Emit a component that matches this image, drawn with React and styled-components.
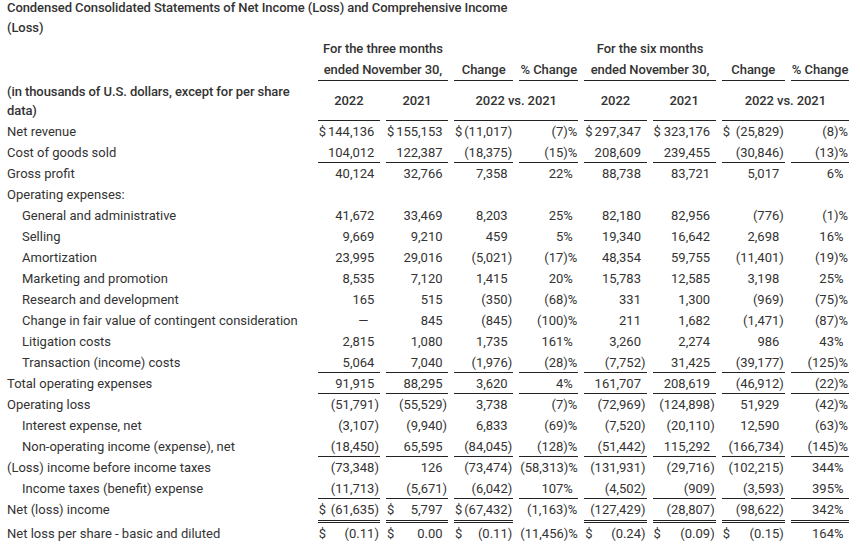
import React from "react";
import styled, { createGlobalStyle, css } from "styled-components";

const GlobalStyle = createGlobalStyle`
  *, *::before, *::after { box-sizing: border-box; }
  html, body { margin: 0; padding: 0; background: #ffffff; }
  body {
    font-family: Roboto, "Liberation Sans", Arial, sans-serif;
    font-size: 13px;
    color: #333333;
  }
`;

const Page = styled.div`
  padding: 0 0 0 1px;
  width: 860px;
`;

const Title = styled.h2`
  margin: -2px 0 0 0;
  padding-left: 6px;
  width: 526px;
  font-size: 13px;
  line-height: 20px;
  font-weight: 500;
  letter-spacing: -0.08px;
  color: #333333;
`;

const Table = styled.table`
  border-collapse: separate;
  border-spacing: 6px 0;
  table-layout: fixed;
  width: 854px;
`;

const Col = styled.col`
  width: ${(p) => p.$w}px;
`;

const Th = styled.th`
  padding: 3px 1px;
  font-weight: 500;
  line-height: 15px;
  letter-spacing: -0.08px;
  text-align: ${(p) => (p.$left ? "left" : "center")};
  vertical-align: middle;
  white-space: nowrap;
  ${(p) =>
    p.$line &&
    css`
      border-bottom: 1px solid #222222;
    `}
  ${(p) =>
    p.$wrap &&
    css`
      white-space: normal;
      line-height: 19px;
      padding: 1px 0;
    `}
`;

const bottomPad = (line) => (line === "double" ? 3 : line ? 2 : 3);

const Label = styled.td`
  padding: 3px 0 ${(p) => bottomPad(p.$line)}px ${(p) => (p.$indent ? 15 : 0)}px;
  line-height: 15px;
  white-space: nowrap;
  text-align: left;
  vertical-align: top;
`;

const Cell = styled.td`
  padding: 3px 1px ${(p) => bottomPad(p.$rowLine)}px 1px;
  line-height: 15px;
  white-space: nowrap;
  text-align: right;
  vertical-align: top;
  ${(p) =>
    p.$line === "single" &&
    css`
      border-bottom: 1px solid #222222;
    `}
  ${(p) =>
    p.$line === "double" &&
    css`
      border-bottom: 3px double #222222;
    `}
`;

const Split = styled.span`
  display: flex;
  justify-content: space-between;
`;

const Pad = styled.span`
  visibility: hidden;
`;

const DashPad = styled.span`
  display: inline-block;
  width: ${(p) => p.$w}px;
`;

const rows = [
  { label: "Net revenue", v: ["$144,136", "$155,153", "$(11,017)", "(7)%", "$297,347", "$323,176", "$(25,829)", "(8)%"] },
  { label: "Cost of goods sold", line: "single", v: ["104,012", "122,387", "(18,375)", "(15)%", "208,609", "239,455", "(30,846)", "(13)%"] },
  { label: "Gross profit", v: ["40,124", "32,766", "7,358", "22%", "88,738", "83,721", "5,017", "6%"] },
  { label: "Operating expenses:", v: ["", "", "", "", "", "", "", ""] },
  { label: "General and administrative", indent: true, v: ["41,672", "33,469", "8,203", "25%", "82,180", "82,956", "(776)", "(1)%"] },
  { label: "Selling", indent: true, v: ["9,669", "9,210", "459", "5%", "19,340", "16,642", "2,698", "16%"] },
  { label: "Amortization", indent: true, v: ["23,995", "29,016", "(5,021)", "(17)%", "48,354", "59,755", "(11,401)", "(19)%"] },
  { label: "Marketing and promotion", indent: true, v: ["8,535", "7,120", "1,415", "20%", "15,783", "12,585", "3,198", "25%"] },
  { label: "Research and development", indent: true, v: ["165", "515", "(350)", "(68)%", "331", "1,300", "(969)", "(75)%"] },
  { label: "Change in fair value of contingent consideration", indent: true, v: ["—", "845", "(845)", "(100)%", "211", "1,682", "(1,471)", "(87)%"] },
  { label: "Litigation costs", indent: true, v: ["2,815", "1,080", "1,735", "161%", "3,260", "2,274", "986", "43%"] },
  { label: "Transaction (income) costs", indent: true, line: "single", v: ["5,064", "7,040", "(1,976)", "(28)%", "(7,752)", "31,425", "(39,177)", "(125)%"] },
  { label: "Total operating expenses", line: "single", v: ["91,915", "88,295", "3,620", "4%", "161,707", "208,619", "(46,912)", "(22)%"] },
  { label: "Operating loss", v: ["(51,791)", "(55,529)", "3,738", "(7)%", "(72,969)", "(124,898)", "51,929", "(42)%"] },
  { label: "Interest expense, net", indent: true, v: ["(3,107)", "(9,940)", "6,833", "(69)%", "(7,520)", "(20,110)", "12,590", "(63)%"] },
  { label: "Non-operating income (expense), net", indent: true, line: "single", v: ["(18,450)", "65,595", "(84,045)", "(128)%", "(51,442)", "115,292", "(166,734)", "(145)%"] },
  { label: "(Loss) income before income taxes", v: ["(73,348)", "126", "(73,474)", "(58,313)%", "(131,931)", "(29,716)", "(102,215)", "344%"] },
  { label: "Income taxes (benefit) expense", indent: true, line: "single", v: ["(11,713)", "(5,671)", "(6,042)", "107%", "(4,502)", "(909)", "(3,593)", "395%"] },
  { label: "Net (loss) income", line: "double", skipLine: [3], v: ["$(61,635)", "$5,797", "$(67,432)", "(1,163)%", "(127,429)", "(28,807)", "(98,622)", "342%"] },
  { label: "Net loss per share - basic and diluted", v: ["$(0.11)", "$0.00", "$(0.11)", "(11,456)%", "$(0.24)", "$(0.09)", "$(0.15)", "164%"] },
];

function Value({ text }) {
  if (!text) return null;
  if (text === "—") {
    return (
      <>
        {text}
        <DashPad $w={6} />
        <Pad>)</Pad>
      </>
    );
  }
  const dollar = text.startsWith("$");
  const body = dollar ? text.slice(1) : text;
  const negative = body.endsWith(")") || body.endsWith(")%");
  const num = (
    <span>
      {body}
      {!negative && <Pad>)</Pad>}
    </span>
  );
  if (dollar) {
    return (
      <Split>
        <span>$</span>
        {num}
      </Split>
    );
  }
  return num;
}

const widths = [304, 62, 62, 59, 59, 62, 63, 63, 58];

export default function App() {
  return (
    <Page>
      <GlobalStyle />
      <Title>
        Condensed Consolidated Statements of Net Income (Loss) and Comprehensive Income (Loss)
      </Title>
      <Table>
        <colgroup>
          {widths.map((w, i) => (
            <Col key={i} $w={w} />
          ))}
        </colgroup>
        <thead>
          <tr>
            <Th />
            <Th colSpan={2}>For the three months</Th>
            <Th colSpan={2} />
            <Th colSpan={2}>For the six months</Th>
            <Th colSpan={2} />
          </tr>
          <tr>
            <Th />
            <Th colSpan={2} $line>ended November 30,</Th>
            <Th $line>Change</Th>
            <Th $line>% Change</Th>
            <Th colSpan={2} $line>ended November 30,</Th>
            <Th $line>Change</Th>
            <Th $line>% Change</Th>
          </tr>
          <tr>
            <Th $left $wrap>(in thousands of U.S. dollars, except for per share data)</Th>
            <Th $line>2022</Th>
            <Th $line>2021</Th>
            <Th colSpan={2} $line>2022 vs. 2021</Th>
            <Th $line>2022</Th>
            <Th $line>2021</Th>
            <Th colSpan={2} $line>2022 vs. 2021</Th>
          </tr>
        </thead>
        <tbody>
          {rows.map((r) => (
            <tr key={r.label}>
              <Label $indent={r.indent} $line={r.line}>{r.label}</Label>
              {r.v.map((val, i) => (
                <Cell
                  key={i}
                  $rowLine={r.line}
                  $line={r.skipLine && r.skipLine.includes(i) ? undefined : r.line}
                >
                  <Value text={val} />
                </Cell>
              ))}
            </tr>
          ))}
        </tbody>
      </Table>
    </Page>
  );
}
